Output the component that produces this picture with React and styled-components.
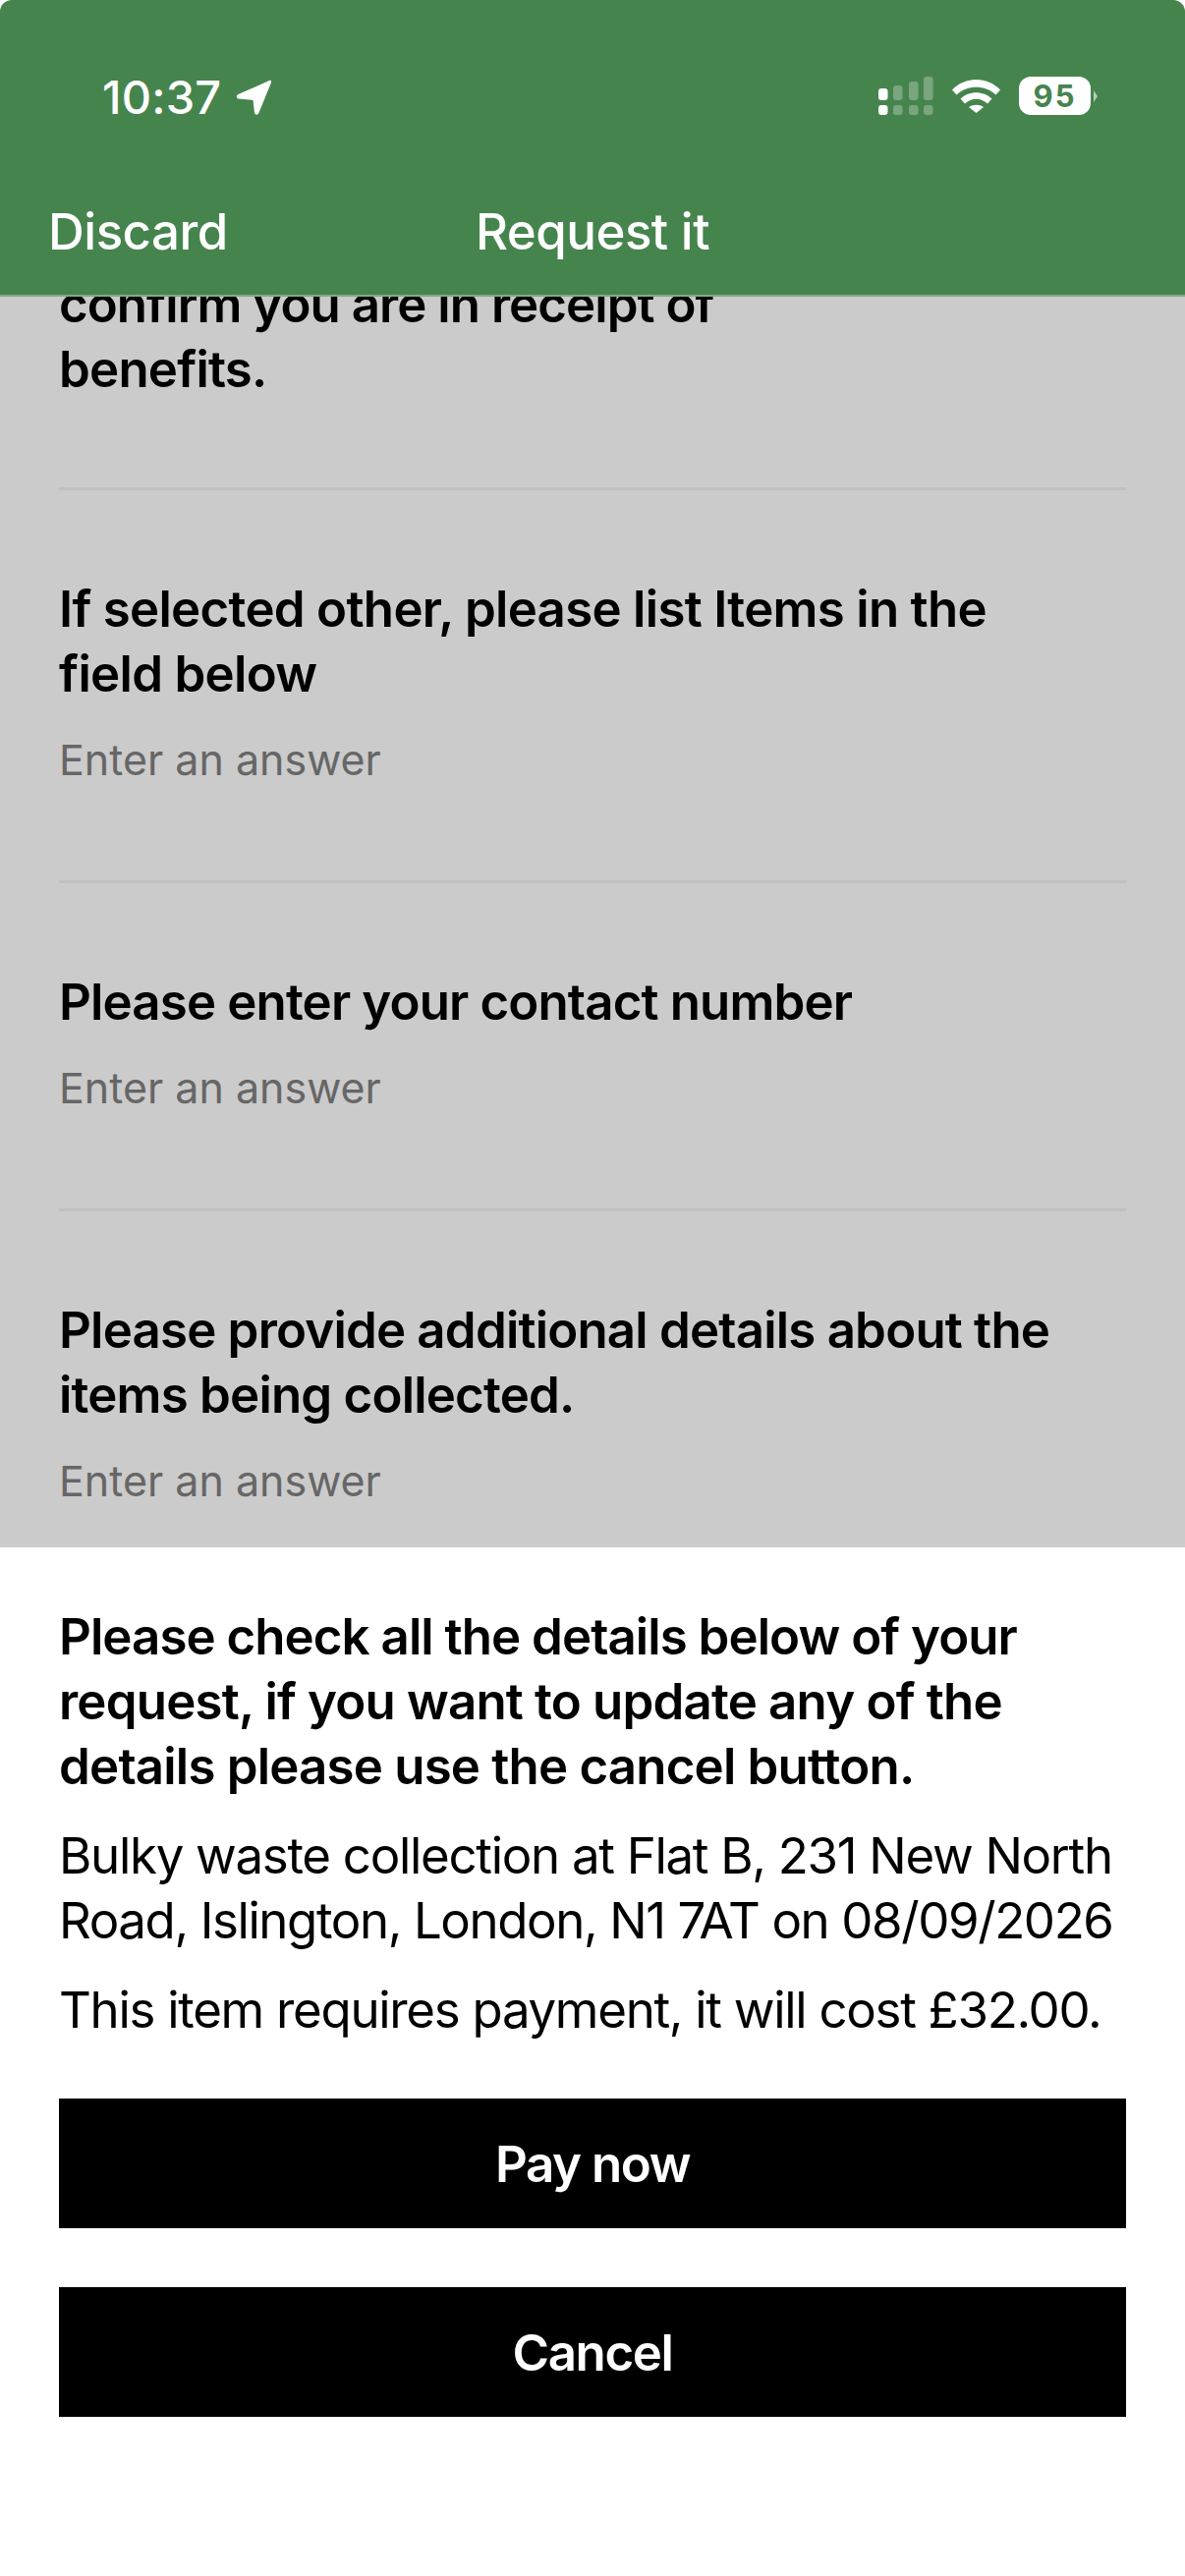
import styled, { createGlobalStyle } from "styled-components";

const GlobalStyle = createGlobalStyle`
  html, body {
    margin: 0;
    padding: 0;
    background: #fff;
  }
  * {
    box-sizing: border-box;
  }
`;

const questions = [
  { id: 1, lines: ["If selected other, please list Items in the", "field below"], spacing: "-0.7px" },
  { id: 2, lines: ["Please enter your contact number"], spacing: "-0.85px" },
  { id: 3, lines: ["Please provide additional details about the", "items being collected."], spacing: "-0.8px" },
];

const SignalIcon = () => (
  <svg width="56" height="39" viewBox="0 0 56 39">
    <g fill="#fff">
      <rect x="0" y="12" width="9.500" height="12" rx="3" />
      <rect x="0" y="29" width="9.500" height="10" rx="3" />
    </g>
    <g fill="#fff" opacity="0.28">
      <rect x="15" y="9" width="9.500" height="15" rx="3" />
      <rect x="15" y="29" width="9.500" height="10" rx="3" />
      <rect x="31" y="5" width="9.500" height="19" rx="3" />
      <rect x="31" y="29" width="9.500" height="10" rx="3" />
      <rect x="46" y="0" width="9.500" height="24" rx="3" />
      <rect x="46" y="29" width="9.500" height="10" rx="3" />
    </g>
  </svg>
);

const WifiIcon = () => (
  <svg width="49" height="34" viewBox="0 0 49 34">
    <g fill="#fff">
      <path d="M0 10.500 C13 -3.500 36 -3.500 49 10.500 L44.500 15.500 C34 5 15 5 4.500 15.500 Z" />
      <path d="M8.500 19.500 C17 11 32 11 40.500 19.500 L36 24.500 C29 18 20 18 13 24.500 Z" />
      <path d="M17 28 C21.500 25 27.500 25 32 28 L24.500 34 Z" />
    </g>
  </svg>
);

const ArrowIcon = () => (
  <svg width="37" height="37" viewBox="0 0 38 38">
    <path
      d="M35 1 C36.500 0.500 37.500 1.500 37 3 L24 35 C22.800 37.500 19.800 37 19.500 34.500 L18 21.500 L3 20 C0.500 19.500 0 16.500 2.500 15.500 Z"
      fill="#fff"
    />
  </svg>
);

const App = () => {
  return (
    <>
      <GlobalStyle />
      <Screen>
        <Header>
          <StatusBar>
            <Clock>
              <Time>10:37</Time>
              <ArrowIcon />
            </Clock>
            <StatusIcons>
              <SignalIcon />
              <WifiIcon />
              <Battery>
                <BatteryBody>95</BatteryBody>
                <BatteryCap />
              </Battery>
            </StatusIcons>
          </StatusBar>
          <NavBar>
            <NavAction>Discard</NavAction>
            <NavTitle>Request it</NavTitle>
          </NavBar>
        </Header>

        <FormArea>
          <ClippedIntro>
            <Question $spacing="-0.95px">confirm you are in receipt of</Question>
            <Question>benefits.</Question>
          </ClippedIntro>
          {questions.map((q) => (
            <Field key={q.id}>
              <QuestionGroup>
                {q.lines.map((line) => (
                  <Question key={line} $spacing={q.spacing}>
                    {line}
                  </Question>
                ))}
              </QuestionGroup>
              <Placeholder>Enter an answer</Placeholder>
            </Field>
          ))}
        </FormArea>

        <Sheet>
          <Question $spacing="-0.95px">Please check all the details below of your</Question>
          <Question $spacing="-0.8px">request, if you want to update any of the</Question>
          <Question $spacing="-0.8px">details please use the cancel button.</Question>
          <Details>
            <BodyText $spacing="-1.3px">Bulky waste collection at Flat B, 231 New North</BodyText>
            <BodyText $spacing="-1.4px">Road, Islington, London, N1 7AT on 08/09/2026</BodyText>
          </Details>
          <Cost $spacing="-1.3px">This item requires payment, it will cost £32.00.</Cost>
          <Actions>
            <ActionButton>Pay now</ActionButton>
            <ActionButton>Cancel</ActionButton>
          </Actions>
        </Sheet>
      </Screen>
    </>
  );
};

export default App;

const Screen = styled.div`
  width: 1206px;
  height: 2622px;
  display: flex;
  flex-direction: column;
  overflow: hidden;
  background: #fff;
  font-family: Inter, "Liberation Sans", sans-serif;
  color: #000;
`;

const Header = styled.header`
  height: 302px;
  flex-shrink: 0;
  position: relative;
  z-index: 1;
  background: #46844e;
  border-radius: 12px 12px 0 0;
  border-bottom: 2px solid #84a888;
  color: #fff;
`;

const StatusBar = styled.div`
  height: 196px;
  display: flex;
  justify-content: space-between;
  align-items: flex-start;
  padding: 77px 89px 0 104px;
`;

const Clock = styled.div`
  display: flex;
  align-items: center;
  gap: 15px;
`;

const Time = styled.span`
  font-size: 47px;
  line-height: 44px;
  font-weight: 500;
  letter-spacing: 0.2px;
`;

const StatusIcons = styled.div`
  display: flex;
  align-items: center;
  gap: 19px;
  margin-top: 1px;
`;

const Battery = styled.div`
  display: flex;
  align-items: center;
  gap: 3px;
`;

const BatteryBody = styled.div`
  width: 73px;
  height: 39px;
  border-radius: 12px;
  background: #fff;
  color: #46844e;
  font-size: 31px;
  font-weight: 700;
  line-height: 39px;
  letter-spacing: 2px;
  text-align: center;
`;

const BatteryCap = styled.div`
  width: 0;
  height: 0;
  border-top: 6px solid transparent;
  border-bottom: 6px solid transparent;
  border-left: 4px solid rgba(255, 255, 255, 0.6);
`;

const NavBar = styled.nav`
  display: grid;
  grid-template-columns: 1fr auto 1fr;
  align-items: center;
  padding: 0 49px;
  height: 80px;
`;

const NavAction = styled.span`
  font-size: 51px;
  line-height: 80px;
  font-weight: 500;
  letter-spacing: -0.5px;
`;

const NavTitle = styled(NavAction)``;

const FormArea = styled.main`
  height: 1273px;
  flex-shrink: 0;
  overflow: hidden;
  background: #cbcbcb;
  padding: 0 60px;
`;

const ClippedIntro = styled.div`
  margin-top: -25px;
  padding-bottom: 87px;
  border-bottom: 3px solid #c0c0c0;
`;

const Field = styled.section`
  padding: 88px 0 96px;
  border-bottom: 3px solid #c0c0c0;

  &:last-child {
    border-bottom: none;
  }
`;

const QuestionGroup = styled.div`
  display: flex;
  flex-direction: column;
`;

const Question = styled.p`
  margin: 0;
  font-size: 51px;
  line-height: 66px;
  font-weight: 600;
  letter-spacing: ${(props) => props.$spacing || "-0.8px"};
  white-space: nowrap;
`;

const Placeholder = styled.p`
  margin: 27px 0 0;
  font-size: 43px;
  line-height: 54px;
  font-weight: 400;
  color: #666;
`;

const Sheet = styled.section`
  flex: 1;
  background: #fff;
  padding: 58px 60px 0;
`;

const Details = styled.div`
  margin-top: 25px;
`;

const BodyText = styled.p`
  margin: 0;
  font-size: 51px;
  line-height: 66px;
  font-weight: 400;
  letter-spacing: ${(props) => props.$spacing};
  white-space: nowrap;
`;

const Cost = styled(BodyText)`
  margin-top: 25px;
`;

const Actions = styled.div`
  display: flex;
  flex-direction: column;
  gap: 60px;
  margin-top: 57px;
`;

const ActionButton = styled.button`
  height: 132px;
  border: none;
  background: #000;
  color: #fff;
  font-family: inherit;
  font-size: 51px;
  font-weight: 600;
  letter-spacing: -1.4px;
`;
